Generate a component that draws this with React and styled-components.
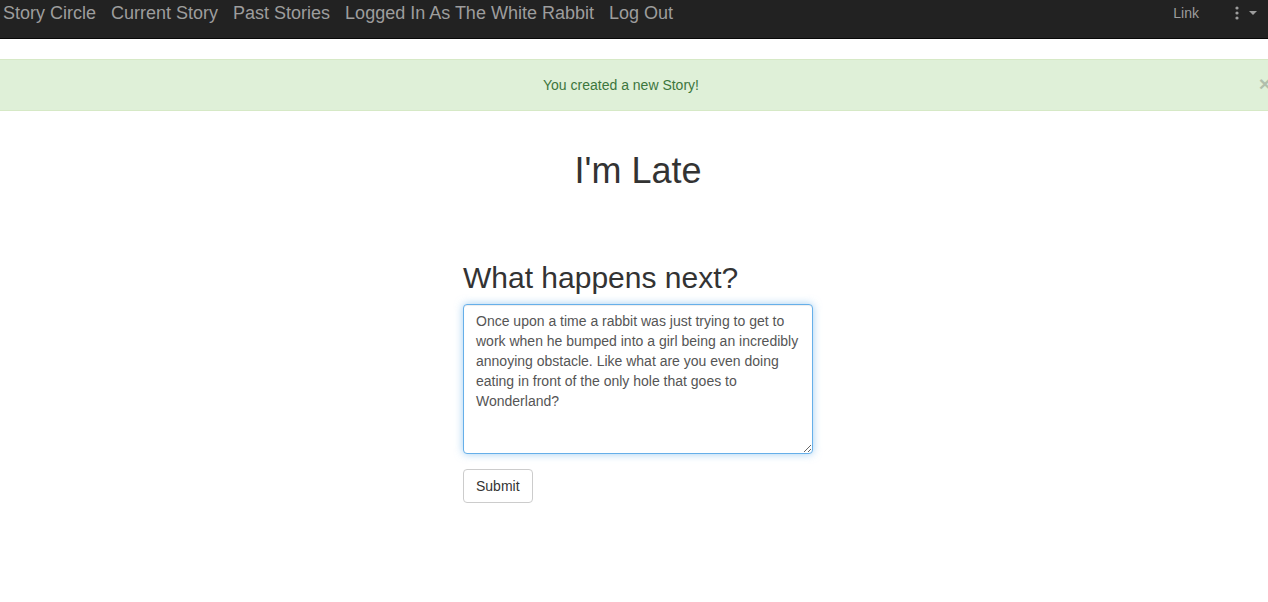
import React, { useEffect, useRef } from "react";
import styled, { createGlobalStyle } from "styled-components";

const Global = createGlobalStyle`
  html, body { margin: 0; padding: 0; background: #fff; }
  body {
    font-family: "Liberation Sans", Arial, Helvetica, sans-serif;
    font-size: 14px;
    line-height: 1.42857;
    color: #333;
  }
  * { box-sizing: border-box; }
`;

const Navbar = styled.nav`
  display: flex;
  align-items: flex-start;
  justify-content: space-between;
  height: 39px;
  background: #222;
  border-bottom: 1px solid #080808;
`;

const NavLeft = styled.div`
  display: flex;
  align-items: center;
  gap: 15px;
  padding-left: 3px;
`;

const Brandish = styled.a`
  color: #9d9d9d;
  font-family: "Liberation Sans", Arial, sans-serif;
  font-size: 18px;
  line-height: 26px;
  text-decoration: none;
  cursor: pointer;
`;

const NavRight = styled.div`
  display: flex;
  align-items: center;
  height: 26px;
  padding-right: 11px;
`;

const SmallLink = styled.a`
  color: #9d9d9d;
  font-size: 14px;
  line-height: 26px;
  text-decoration: none;
  margin-right: 36px;
`;

const Dropdown = styled.div`
  display: flex;
  align-items: center;
  gap: 10px;
  color: #9d9d9d;
`;

const Caret = styled.span`
  width: 0;
  height: 0;
  border-top: 4px solid #9d9d9d;
  border-left: 4px solid transparent;
  border-right: 4px solid transparent;
`;

const Alert = styled.div`
  position: relative;
  margin: 20px 0 20px;
  padding: 15px 41px 15px 15px;
  background: #dff0d8;
  border-top: 1px solid #d6e9c6;
  border-bottom: 1px solid #d6e9c6;
  color: #3c763d;
  text-align: center;
  font-size: 14px;
  line-height: 20px;
`;

const Close = styled.span`
  position: absolute;
  right: -3px;
  top: 14px;
  font-size: 21px;
  font-weight: bold;
  line-height: 20px;
  color: #000;
  opacity: 0.2;
`;

const Main = styled.main`
  display: flex;
  flex-direction: column;
  align-items: center;
  padding-left: 8px;
`;

const Title = styled.h1`
  margin: 20px 0 0;
  font-size: 36px;
  font-weight: 500;
  line-height: 1.1;
  color: #333;
`;

const Form = styled.form`
  width: 350px;
  margin-top: 70px;
  display: flex;
  flex-direction: column;
  align-items: flex-start;
`;

const Subtitle = styled.h2`
  margin: 0 0 10px;
  font-size: 30px;
  font-weight: 500;
  line-height: 1.1;
  color: #333;
`;

const TextArea = styled.textarea`
  display: block;
  width: 350px;
  height: 150px;
  padding: 6px 12px;
  font-family: "Liberation Sans", Arial, sans-serif;
  font-size: 14px;
  line-height: 20px;
  color: #555;
  background: #fff;
  border: 1px solid #66afe9;
  border-radius: 4px;
  outline: 0;
  box-shadow: inset 0 1px 1px rgba(0,0,0,.075), 0 0 8px rgba(102,175,233,.6);
  resize: vertical;
  caret-color: #333;
`;

const Button = styled.button`
  margin-top: 15px;
  padding: 6px 12px;
  font-family: "Liberation Sans", Arial, sans-serif;
  font-size: 14px;
  line-height: 20px;
  color: #333;
  background: #fff;
  border: 1px solid #ccc;
  border-radius: 4px;
  cursor: pointer;
`;

const Kebab = () => (
  <svg width="4" height="14" viewBox="0 0 4 14">
    <circle cx="2" cy="2" r="1.6" fill="#9d9d9d" />
    <circle cx="2" cy="7" r="1.6" fill="#9d9d9d" />
    <circle cx="2" cy="12" r="1.6" fill="#9d9d9d" />
  </svg>
);

const story =
  "Once upon a time a rabbit was just trying to get to work when he bumped into a girl being an incredibly annoying obstacle. Like what are you even doing eating in front of the only hole that goes to Wonderland?";

export default function App() {
  const ref = useRef(null);
  useEffect(() => {
    const el = ref.current;
    if (el) {
      el.focus();
      el.setSelectionRange(story.length, story.length);
    }
  }, []);
  return (
    <>
      <Global />
      <Navbar>
        <NavLeft>
          <Brandish>Story Circle</Brandish>
          <Brandish>Current Story</Brandish>
          <Brandish>Past Stories</Brandish>
          <Brandish>Logged In As The White Rabbit</Brandish>
          <Brandish>Log Out</Brandish>
        </NavLeft>
        <NavRight>
          <SmallLink>Link</SmallLink>
          <Dropdown>
            <Kebab />
            <Caret />
          </Dropdown>
        </NavRight>
      </Navbar>
      <Alert>
        You created a new Story!
        <Close>×</Close>
      </Alert>
      <Main>
        <Title>I'm Late</Title>
        <Form onSubmit={(e) => e.preventDefault()}>
          <Subtitle>What happens next?</Subtitle>
          <TextArea ref={ref} defaultValue={story} />
          <Button type="submit">Submit</Button>
        </Form>
      </Main>
    </>
  );
}
